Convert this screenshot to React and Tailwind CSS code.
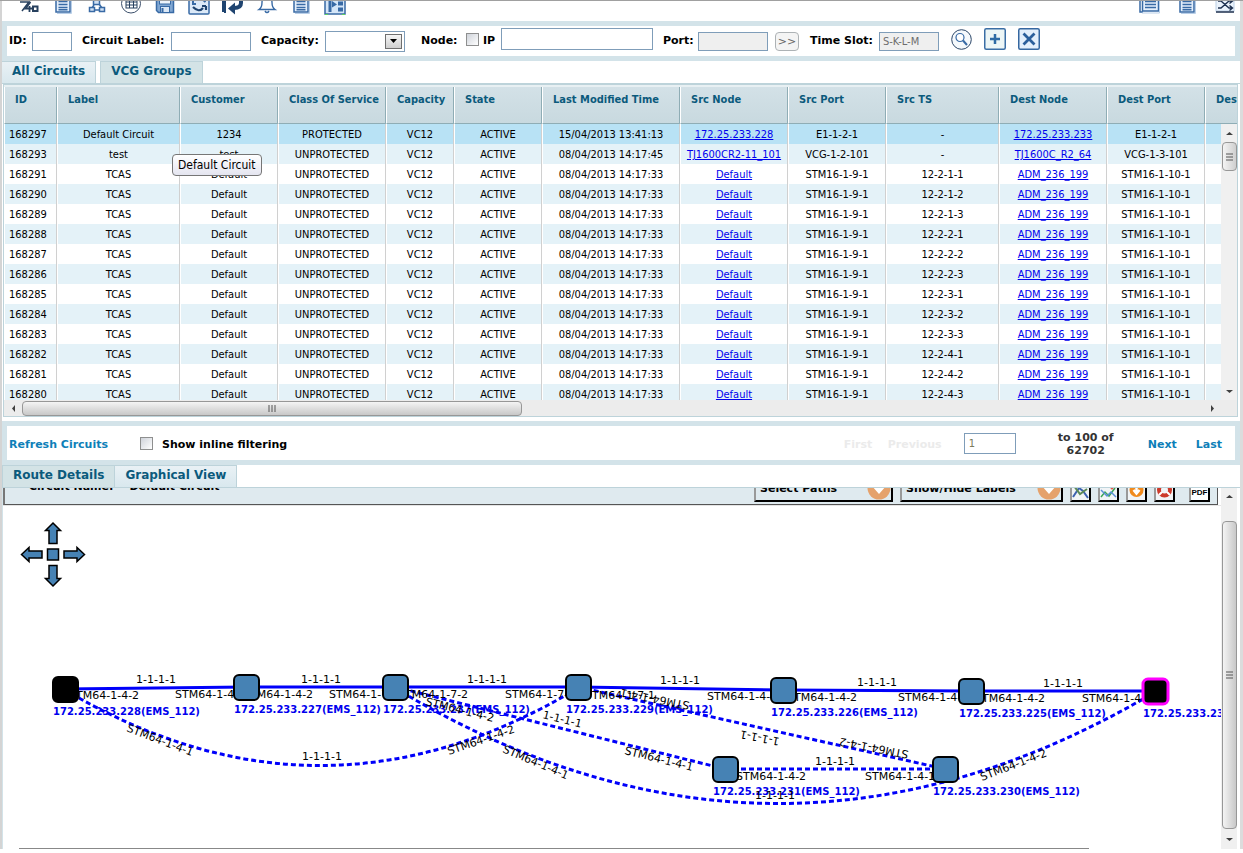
import React from 'react'

const COLUMNS = [
  'ID', 'Label', 'Customer', 'Class Of Service', 'Capacity', 'State', 'Last Modified Time',
  'Src Node', 'Src Port', 'Src TS', 'Dest Node', 'Dest Port', 'Dest TS',
]
const WIDTHS = [53, 123, 98, 108, 68, 88, 138, 108, 98, 113, 108, 98, 113]

const tcas = (id, ts) => [
  id, 'TCAS', 'Default', 'UNPROTECTED', 'VC12', 'ACTIVE', '08/04/2013 14:17:33',
  'Default', 'STM16-1-9-1', ts, 'ADM_236_199', 'STM16-1-10-1', '',
]

const ROWS = [
  ['168297', 'Default Circuit', '1234', 'PROTECTED', 'VC12', 'ACTIVE', '15/04/2013 13:41:13', '172.25.233.228', 'E1-1-2-1', '-', '172.25.233.233', 'E1-1-2-1', ''],
  ['168293', 'test', 'test', 'UNPROTECTED', 'VC12', 'ACTIVE', '08/04/2013 14:17:45', 'TJ1600CR2-11_101', 'VCG-1-2-101', '-', 'TJ1600C_R2_64', 'VCG-1-3-101', ''],
  tcas('168291', '12-2-1-1'),
  tcas('168290', '12-2-1-2'),
  tcas('168289', '12-2-1-3'),
  tcas('168288', '12-2-2-1'),
  tcas('168287', '12-2-2-2'),
  tcas('168286', '12-2-2-3'),
  tcas('168285', '12-2-3-1'),
  tcas('168284', '12-2-3-2'),
  tcas('168283', '12-2-3-3'),
  tcas('168282', '12-2-4-1'),
  tcas('168281', '12-2-4-2'),
  tcas('168280', '12-2-4-3'),
]

// network map data, in canvas coordinates
const NODES = [
  { x: 65, y: 689, ip: '172.25.233.228', kind: 'source' },
  { x: 246, y: 687, ip: '172.25.233.227' },
  { x: 395, y: 687, ip: '172.25.233.237' },
  { x: 578, y: 687, ip: '172.25.233.229' },
  { x: 783, y: 690, ip: '172.25.233.226' },
  { x: 971, y: 691, ip: '172.25.233.225' },
  { x: 1155, y: 691, ip: '172.25.233.233', kind: 'target' },
  { x: 725, y: 769, ip: '172.25.233.231' },
  { x: 945, y: 769, ip: '172.25.233.230' },
]

const WORKING = ['M65 689L246 687', 'M246 687H395', 'M395 687H578', 'M578 687L783 690', 'M783 690L971 691', 'M971 691H1155']
const PROTECT = [
  'M65 690Q322 842 578 688',
  'M395 688Q775 917 1155 692',
  'M395 687L725 769',
  'M578 687L945 769',
  'M725 769H945',
]

const LABELS = [
  [136, 683, 0, '1-1-1-1'], [69, 699, 0, 'STM64-1-4-2'], [175, 698, 0, 'STM64-1-4-1'],
  [301, 683, 0, '1-1-1-1'], [243, 698, 0, 'STM64-1-4-2'], [329, 698, 0, 'STM64-1-7-1'],
  [467, 683, 0, '1-1-1-1'], [398, 698, 0, 'STM64-1-7-2'], [505, 698, 0, 'STM64-1-7-1'],
  [660, 684, 0, '1-1-1-1'], [585, 699, 0, 'STM64-1-7-1'], [707, 700, 0, 'STM64-1-4-1'],
  [857, 686, 0, '1-1-1-1'], [787, 701, 0, 'STM64-1-4-2'], [898, 701, 0, 'STM64-1-4-1'],
  [1043, 687, 0, '1-1-1-1'], [975, 702, 0, 'STM64-1-4-2'], [1082, 702, 0, 'STM64-1-4-1'],
  [815, 765, 0, '1-1-1-1'], [736, 780, 0, 'STM64-1-4-2'], [865, 780, 0, 'STM64-1-4-1'],
  [126, 731, 21, 'STM64-1-4-1'], [302, 760, 0, '1-1-1-1'], [449, 755, -19, 'STM64-1-4-2'],
  [502, 752, 23, 'STM64-1-4-1'], [755, 799, 0, '1-1-1-1'], [982, 781, -21, 'STM64-1-4-2'],
  [425, 705, 14, 'STM64-1-4-2'], [542, 718, 14, '1-1-1-1'], [624, 754, 14, 'STM64-1-4-1'],
  [909, 751, 191, 'STM64-1-4-2'], [780, 738, 191, '1-1-1-1'], [690, 702, 191, 'STM64-1-4-1'],
]

const BLUE = '#386aa5'

function ToolIcon({ children }) {
  return (
    <button type="button" className="shrink-0">
      <svg width="22" height="22" viewBox="0 0 22 22" fill="none" stroke={BLUE}>{children}</svg>
    </button>
  )
}

function PageIcon() {
  return (
    <ToolIcon>
      <rect x="4" y="2" width="14" height="17" fill="#e3eefb" strokeWidth="1.5" />
      <path d="M6.500 5.500h9M6.500 8.500h9M6.500 11.500h9M6.500 14.500h9M6.500 16.800h9" strokeWidth="1.500" />
      <path d="M19.500 4v16.500H5" stroke="#b9cfe8" />
    </ToolIcon>
  )
}

function ToolBar() {
  return (
    <div className="flex h-5 items-end overflow-hidden bg-white pr-1 pb-[6px] pl-4">
      <div className="flex gap-3">
        <ToolIcon>
          <path d="M2 9h9L4 18" stroke="#27405e" strokeWidth="1.500" />
          <path d="M12.500 9L7.500 15.500h7M11.500 13v6" stroke="#27405e" strokeWidth="1.800" />
          <rect x="15" y="13.500" width="4.500" height="4.500" strokeWidth="2" stroke="#27405e" />
        </ToolIcon>
        <PageIcon />
        <ToolIcon>
          <path d="M8 12l-2 3M13 11l3 4M9 17h4" strokeWidth="1.500" />
          <rect x="7.500" y="6.500" width="6" height="5" fill="#cfe0f3" strokeWidth="1.500" />
          <rect x="3.500" y="14.500" width="5" height="4" fill="#cfe0f3" strokeWidth="1.500" />
          <rect x="13.500" y="14.500" width="5" height="4" fill="#cfe0f3" strokeWidth="1.500" />
        </ToolIcon>
        <ToolIcon>
          <circle cx="11" cy="10.500" r="9.500" stroke="#3b4f6b" fill="#fff" />
          <rect x="6" y="6" width="11" height="9" stroke="#27405e" />
          <path d="M6 9h11M6 12h11M9.500 6v9M13.500 6v9" stroke="#27405e" />
        </ToolIcon>
        <ToolIcon>
          <path d="M2.500 3.500h17v16h-15l-2-2z" fill="#7fa6d2" strokeWidth="1.500" />
          <rect x="5.500" y="3" width="11" height="8" fill="#eef5fc" />
          <rect x="6.500" y="13.500" width="9" height="6" fill="#dbe8f6" />
          <path d="M8.500 15v4" strokeWidth="2" />
        </ToolIcon>
        <ToolIcon>
          <rect x="1" y="1" width="20" height="20" rx="1" fill="#dbe9f8" strokeWidth="1.500" />
          <path d="M5 11V8M4 11h4M17.500 9q-3-3-6-3" strokeWidth="2" />
          <path d="M18 13v4M18 13h-4M5 14q6 6 10 1" stroke="#1f4470" strokeWidth="2.200" />
        </ToolIcon>
        <ToolIcon>
          <path d="M2 2v17M2 18h2" stroke="#1f4470" strokeWidth="4" />
          <path d="M19 4v6q0 5-7 5" stroke="#1f4470" strokeWidth="4" />
          <path d="M6 15.500l7-6v12z" fill="#1f4470" stroke="none" />
        </ToolIcon>
        <ToolIcon>
          <path d="M3 16.500q3-2 3-7t5-6q5 1 5 6t3 7z" fill="#fff" strokeWidth="1.400" />
          <path d="M9 18q2 3 4 0" strokeWidth="1.500" />
        </ToolIcon>
        <PageIcon />
        <ToolIcon>
          <rect x="1" y="1" width="20" height="20" fill="#d5e6f8" strokeWidth="1.500" />
          <path d="M6 3v16" strokeWidth="3" />
          <path d="M8 8l5 3.500-5 3z" fill={BLUE} stroke="none" />
          <path d="M14 10.500h5M14 16.500h5" strokeWidth="4" />
          <path d="M1 21.500h3M18 21.500h3" stroke="#5fd35f" />
        </ToolIcon>
      </div>
      <div className="ml-auto flex gap-4">
        <ToolIcon>
          <path d="M2 2v17h3" strokeWidth="1.500" />
          <rect x="4.500" y="2" width="16" height="16" fill="#e3eefb" strokeWidth="1.500" />
          <path d="M7 8.500h11M7 11.500h11M7 14.500h11" strokeWidth="1.500" />
          <path d="M21.500 5v15H4" stroke="#b9cfe8" />
        </ToolIcon>
        <PageIcon />
        <ToolIcon>
          <rect x="2" y="2" width="18" height="16" fill="#eaf2fb" stroke="#bcd0e6" />
          <path d="M2 19h18" stroke="#1c2f4e" strokeWidth="1.500" />
          <path d="M4 8h3l8 7h3M4 15h3l8-7h3M15.500 5.500L18.500 8l-3 2.500M15.500 12.500l3 2.500-3 2.500" stroke="#1c2f4e" strokeWidth="1.400" />
        </ToolIcon>
      </div>
    </div>
  )
}

function FilterBar() {
  return (
    <form className="border-x-5 border-y-5 border-[#d3e3e9] bg-white">
      <div className="flex h-[30px] items-center pl-[2px] text-[11px] font-bold text-black">
        <label htmlFor="cid" className="w-[23px]">ID:</label>
        <input id="cid" className="h-[19px] w-10 border border-[#7f9db9] bg-white px-1" />
        <label htmlFor="clabel" className="ml-[10px] w-[89px]">Circuit Label:</label>
        <input id="clabel" className="h-[19px] w-20 border border-[#7f9db9] bg-white px-1" />
        <label htmlFor="cap" className="ml-[10px] w-16">Capacity:</label>
        <div className="relative">
          <select id="cap" className="block h-[21px] w-20 appearance-none border border-[#7f9db9] bg-white">
            <option></option>
          </select>
          <span className="pointer-events-none absolute top-[3px] right-[3px] flex h-[15px] w-[17px] items-center justify-center border border-[#6f6f6f] bg-linear-to-b from-[#f6f6f6] to-[#cfcfcf]">
            <svg width="7" height="4"><path d="M0 0h7L3.500 4z" fill="#000" /></svg>
          </span>
        </div>
        <span className="ml-4 w-[45px]">Node:</span>
        <input id="ip" type="checkbox" className="mb-1 h-[13px] w-[13px] appearance-none border border-[#8e8f8f] bg-linear-to-br from-[#cfd3da] to-white" />
        <label htmlFor="ip" className="ml-1 w-[18px]">IP</label>
        <input aria-label="IP" className="mb-1 h-[22px] w-[152px] border border-[#7f9db9] bg-white px-1" />
        <label htmlFor="port" className="ml-[10px] w-[35px]">Port:</label>
        <input id="port" disabled className="h-[19px] w-[70px] border border-[#7f9db9] bg-[#efefef]" />
        <button type="button" className="ml-[7px] h-[19px] w-6 rounded-sm border border-[#adb2b5] bg-[#f4f4f4] text-[11px] leading-none font-normal text-[#666]">&gt;&gt;</button>
        <label htmlFor="slot" className="ml-[11px] w-[69px]">Time Slot:</label>
        <input id="slot" disabled defaultValue="S-K-L-M" className="h-[19px] w-[60px] border border-[#7f9db9] bg-[#efefef] px-[3px] font-['DejaVu_Sans_Condensed','DejaVu_Sans',sans-serif] text-[11px] font-normal text-[#6d6d6d]" />
        <div className="mb-1 ml-3 flex gap-3">
          <button type="button" aria-label="Search">
            <svg width="21" height="21" viewBox="0 0 21 21" fill="none">
              <circle cx="10.500" cy="10.500" r="9.800" fill="#f5f9fc" stroke="#2b4668" />
              <circle cx="9" cy="8.500" r="4" fill="#fff" stroke={BLUE} strokeWidth="1.200" />
              <path d="M12 11.500l4 4.500" stroke={BLUE} strokeWidth="2" />
            </svg>
          </button>
          <button type="button" aria-label="Add">
            <svg width="22" height="22" viewBox="0 0 22 22" fill="none">
              <rect x=".75" y=".75" width="20.500" height="20.500" rx="1.500" fill="#edf6f6" stroke="#3b6ea5" strokeWidth="1.500" />
              <path d="M6 11h10M11 6v10" stroke="#2f6ba5" strokeWidth="2.500" />
            </svg>
          </button>
          <button type="button" aria-label="Clear">
            <svg width="22" height="22" viewBox="0 0 22 22" fill="none">
              <rect x=".75" y=".75" width="20.500" height="20.500" rx="1.500" fill="#e3effb" stroke="#3567a0" strokeWidth="1.500" />
              <path d="M5.500 5.500l11 11M16.500 5.500l-11 11" stroke="#2b5f9b" strokeWidth="2.800" />
            </svg>
          </button>
        </div>
      </div>
    </form>
  )
}

function Tab({ active, children }) {
  return (
    <button
      type="button"
      className={
        active
          ? 'h-[22px] border-t border-r border-[#bdd3da] bg-linear-to-b from-[#e9f1f5] to-[#d9e8ee] px-[10px] pb-[3px] text-xs font-bold text-[#0b5a7c]'
          : 'h-[22px] border-t border-r border-l border-[#bdd3da] bg-[#d3e3e6] px-[10px] pb-[3px] text-xs font-bold text-[#0b5a7c]'
      }
    >
      {children}
    </button>
  )
}

function Arrow({ d }) {
  return (
    <svg width="7" height="7" viewBox="0 0 7 7"><path d={d} fill="#404040" /></svg>
  )
}

function CircuitGrid() {
  return (
    <div className="mr-[2px] ml-px border border-[#bdd3da] bg-white">
      <div className="relative h-[315px] overflow-hidden border-t-2 border-[#e8f0f3] font-['DejaVu_Sans_Condensed','DejaVu_Sans',sans-serif] text-[11px]">
        <table className="w-[1214px] min-w-full table-fixed border-separate border-spacing-0">
          <colgroup>
            {WIDTHS.map((w, i) => <col key={i} style={{ width: w }} />)}
          </colgroup>
          <thead>
            <tr className="h-[37px] bg-linear-to-b from-[#d3e1e7] to-[#c8d9df]">
              {COLUMNS.map(c => (
                <th key={c} className="border-r border-b border-l border-r-[#8fadb5] border-b-[#8fadb5] border-l-white pt-[5px] pl-[10px] text-left align-top font-bold whitespace-nowrap text-[#0b5a7c]">{c}</th>
              ))}
            </tr>
          </thead>
          <tbody>
            {ROWS.map((row, r) => (
              <tr key={row[0]} className={r === 0 ? 'h-5 bg-[#b8e2f5]' : r % 2 ? 'h-5 bg-[#e4f2f8]' : 'h-5 bg-white'}>
                {row.map((v, c) => (
                  <td key={c} className={c === 0 ? 'border-r border-l border-r-[#d0d0d0] border-l-white p-0 pt-[3px] pl-1 whitespace-nowrap text-black' : 'border-r border-l border-r-[#d0d0d0] border-l-white p-0 pt-[3px] text-center whitespace-nowrap text-black'}>
                    {c === 7 || c === 10 ? <a href="#node" className="text-[#0000ee] underline">{v}</a> : v}
                  </td>
                ))}
              </tr>
            ))}
          </tbody>
        </table>
        <div className="absolute top-[37px] right-0 bottom-0 flex w-4 flex-col items-center bg-[#f0f0f0]">
          <div className="flex h-[18px] items-center"><Arrow d="M0 5L3.500 2 7 5z" /></div>
          <div className="flex h-[29px] w-[15px] items-center justify-center rounded-sm border border-[#979797] bg-linear-to-r from-[#f4f4f4] to-[#cfcfcf]">
            <svg width="7" height="8"><path d="M0 1h7M0 4h7M0 7h7" stroke="#555" /></svg>
          </div>
          <div className="mt-auto flex h-[18px] items-center"><Arrow d="M0 2h7L3.500 5z" /></div>
        </div>
        <div role="tooltip" className="absolute top-[67px] left-[168px] flex h-[22px] items-center rounded-sm border border-[#767676] bg-linear-to-b from-white to-[#e4e5f0] px-[5px] text-xs text-black">Default Circuit</div>
      </div>
      <div className="flex h-4 items-center bg-[#ececec]">
        <div className="flex w-[18px] justify-center"><Arrow d="M5 0v7L2 3.500z" /></div>
        <div className="flex h-[15px] w-[500px] items-center justify-center rounded-sm border border-[#979797] bg-linear-to-b from-[#f4f4f4] to-[#c8c8c8]">
          <svg width="9" height="7"><path d="M1 0v7M4 0v7M7 0v7" stroke="#555" /></svg>
        </div>
        <div className="mr-[21px] ml-auto"><Arrow d="M2 0v7l3-3.500z" /></div>
      </div>
    </div>
  )
}

function Pager() {
  return (
    <div className="border-5 border-[#d3e3e9] bg-white">
      <div className="flex h-[34px] items-center pl-[2px] text-[11px] font-bold">
        <a href="#refresh" className="w-[131px] pt-1 text-[#0e7fb8]">Refresh Circuits</a>
        <input id="inline" type="checkbox" className="h-[13px] w-[13px] appearance-none border border-[#8e8f8f] bg-linear-to-br from-[#cfd3da] to-white" />
        <label htmlFor="inline" className="ml-[9px] pt-1 text-black">Show inline filtering</label>
        <div className="ml-auto flex items-center pr-[13px]">
          <span className="w-11 pt-1 text-[#ebebeb]">First</span>
          <span className="w-[76px] pt-1 text-[#ebebeb]">Previous</span>
          <input aria-label="Page" defaultValue="1" className="h-[21px] w-[52px] border border-[#7f9db9] px-1 font-['DejaVu_Sans_Condensed','DejaVu_Sans',sans-serif] font-normal text-[#7a7a5a]" />
          <span className="mr-2 ml-4 w-[108px] pt-[2px] text-center leading-[13px] text-[#333]">to 100 of<br />62702</span>
          <a href="#next" className="w-12 pt-1 text-[#0e7fb8]">Next</a>
          <a href="#last" className="pt-1 text-[#0e7fb8]">Last</a>
        </div>
      </div>
    </div>
  )
}

function DropButton({ children }) {
  return (
    <button type="button" className="flex h-[26px] items-start border-2 border-t-[#eee] border-r-black border-b-black border-l-[#999] pl-1 text-[11px] font-bold text-black">
      <span className="mr-5 leading-[21px]">{children}</span>
      <svg width="24" height="22" viewBox="0 0 24 22" className="ml-auto">
        <circle cx="12" cy="10" r="11.500" fill="#e5a26c" />
        <path d="M5 8l3-3 4 4 4-4 3 3-7 8z" fill="#fff" />
      </svg>
    </button>
  )
}

function SmallButton({ children }) {
  return (
    <button type="button" className="h-[22px] w-[21px] border-2 border-t-[#ddd] border-r-black border-b-black border-l-[#999] bg-[#f1f4f6]">
      <svg width="17" height="18" viewBox="0 0 17 18" fill="none">{children}</svg>
    </button>
  )
}

function MapToolBar() {
  return (
    <div className="flex h-[17px] items-end overflow-hidden border-r border-b border-l-2 border-r-[#555] border-b-[#555] border-l-[#777] bg-[#dfeaef] pr-[7px] pb-[2px] text-[11px] font-bold text-black">
      <div className="flex h-[26px] gap-4 pl-6 leading-[21px]"><span>Circuit Name:</span><span>Default Circuit</span></div>
      <div className="ml-auto flex items-end gap-[7px]">
        <div className="grid w-[139px]"><DropButton>Select Paths</DropButton></div>
        <div className="grid w-[163px]"><DropButton>Show/Hide Labels</DropButton></div>
        <SmallButton>
          <path d="M1 15l6-9 4 3 5 7" stroke="#3d62b0" strokeWidth="2" />
          <path d="M2 4l6 8 7-5" stroke="#5d8a58" strokeWidth="2" />
        </SmallButton>
        <SmallButton>
          <path d="M1 15l4-5 4 4 6-8" stroke="#3aa655" strokeWidth="1.500" />
          <path d="M1 8l6 6 4-4 5 5" stroke="#5b8fd6" strokeWidth="1.500" />
          <circle cx="12" cy="6" r="1.500" fill="#e05a4e" />
        </SmallButton>
        <SmallButton>
          <circle cx="8.500" cy="8" r="7" fill="#f08a1d" />
          <path d="M8.500 3v8M5.500 8l3 3.500 3-3.500" stroke="#fff" strokeWidth="2.500" />
        </SmallButton>
        <SmallButton>
          <circle cx="8.500" cy="8" r="5.500" stroke="#cc3a2b" strokeWidth="4" />
          <path d="M3 13l3-3M14 13l-3-3" stroke="#fff" strokeWidth="2" />
        </SmallButton>
        <button type="button" className="ml-[7px] h-[22px] w-[21px] border-2 border-t-[#ddd] border-r-black border-b-black border-l-[#999] bg-white pt-1 font-['Liberation_Sans',sans-serif] text-[8px] leading-none">PDF</button>
      </div>
    </div>
  )
}

function NetworkMap() {
  return (
    <svg width="100%" height="342" className="block" fontFamily="'DejaVu Sans', Verdana, sans-serif">
      <g transform="translate(-3 -506)">
        <g fill="#4682b4" stroke="#000" strokeWidth="1.500">
          <rect x="47.500" y="549" width="11" height="11" />
          <path d="M53 523l7.500 7.500h-3.500v13h-8v-13h-3.500z" />
          <path d="M53 586l7.500-7.500h-3.500v-13h-8v13h-3.500z" />
          <path d="M21.500 554.500l7.500-7v3.500h13v7h-13v3.500z" />
          <path d="M84.500 554.500l-7.500-7v3.500h-13v7h13v3.500z" />
        </g>
        <g fill="none" stroke="#0000fa" strokeWidth="3">
          {WORKING.map(d => <path key={d} d={d} />)}
          {PROTECT.map(d => <path key={d} d={d} strokeDasharray="5 3" />)}
        </g>
        <g fontSize="10" fontWeight="bold" fill="#0000ee">
          {NODES.map(n => <text key={n.ip} x={n.x - 12} y={n.y + 26}>{n.ip}(EMS_112)</text>)}
        </g>
        <g fontSize="11" fill="#000">
          {LABELS.map(([x, y, a, t], i) => (
            <text key={i} transform={`translate(${x} ${y}) rotate(${a})`}>{t}</text>
          ))}
        </g>
        {NODES.map(n => (
          <rect
            key={n.ip}
            x={n.x - 12}
            y={n.y - 12}
            width="25"
            height="25"
            rx="5"
            fill={n.kind ? '#000' : '#4682b4'}
            stroke={n.kind === 'target' ? '#ff00ff' : '#000'}
            strokeWidth={n.kind === 'target' ? 3 : 2}
          />
        ))}
      </g>
    </svg>
  )
}

export default function App() {
  return (
    <div className="min-h-screen border-t border-[#a0a0a0] bg-white font-['DejaVu_Sans',Verdana,sans-serif]">
      <div className="border-r-3 border-l-2 border-r-[#dcdcdc] border-l-[#d4d4d4]">
        <ToolBar />
        <FilterBar />
        <div className="flex gap-1 border-b border-[#bdd3da]">
          <Tab active>All Circuits</Tab>
          <Tab>VCG Groups</Tab>
        </div>
        <CircuitGrid />
        <div className="mt-1"><Pager /></div>
        <div className="flex border-b border-[#bdd3da]">
          <Tab>Route Details</Tab>
          <Tab active>Graphical View</Tab>
        </div>
        <div className="flex border-l border-[#d3e3e9] pr-[3px]">
          <div className="min-w-0 flex-1">
            <div className="border-b border-[#e4e4e4] pr-[3px]"><MapToolBar /></div>
            <NetworkMap />
            <div className="mr-[132px] ml-4 border-t border-[#888]"></div>
          </div>
          <div className="flex w-4 flex-col items-center bg-[#f0f0f0]">
            <div className="flex h-[33px] items-center pb-4"><Arrow d="M0 5L3.500 2 7 5z" /></div>
            <div className="flex w-[15px] flex-1 items-center justify-center rounded-sm border border-[#979797] bg-linear-to-r from-[#f4f4f4] to-[#c8c8c8]">
              <svg width="7" height="8"><path d="M0 1h7M0 4h7M0 7h7" stroke="#555" /></svg>
            </div>
            <div className="flex h-5 items-center"><Arrow d="M0 2h7L3.500 5z" /></div>
          </div>
        </div>
      </div>
    </div>
  )
}
